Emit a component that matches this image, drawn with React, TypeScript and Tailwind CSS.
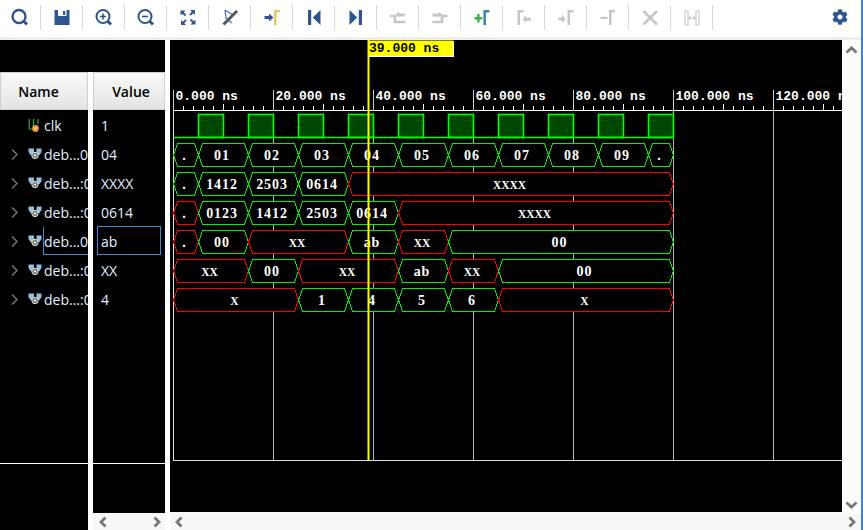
import { FaCog } from 'react-icons/fa';
import type { ReactNode } from 'react';

const NAVY = '#2e5590';
const GRAY = '#c6c6c6';
const GREEN = '#00f000';
const CLK_GREEN = '#00ff00';
const RED = '#ff0000';
const T0 = 173.5;
const px = (ns: number) => T0 + ns * 5;

// [label, start ns, end ns, invalid?]
type Seg = [string, number, number, boolean?];

const buses: Seg[][] = [
  [['.', 0, 5], ['01', 5, 15], ['02', 15, 25], ['03', 25, 35], ['04', 35, 45], ['05', 45, 55], ['06', 55, 65], ['07', 65, 75], ['08', 75, 85], ['09', 85, 95], ['.', 95, 100]],
  [['.', 0, 5], ['1412', 5, 15], ['2503', 15, 25], ['0614', 25, 35], ['XXXX', 35, 100, true]],
  [['.', 0, 5, true], ['0123', 5, 15], ['1412', 15, 25], ['2503', 25, 35], ['0614', 35, 45], ['XXXX', 45, 100, true]],
  [['.', 0, 5, true], ['00', 5, 15], ['XX', 15, 35, true], ['ab', 35, 45], ['XX', 45, 55, true], ['00', 55, 100]],
  [['XX', 0, 15, true], ['00', 15, 25], ['XX', 25, 45, true], ['ab', 45, 55], ['XX', 55, 65, true], ['00', 65, 100]],
  [['X', 0, 25, true], ['1', 25, 35], ['4', 35, 45], ['5', 45, 55], ['6', 55, 65], ['X', 65, 100, true]],
];

const rows = [
  { name: 'clk', value: '1', clk: true },
  { name: 'deb...0)', value: '04' },
  { name: 'deb...:0', value: 'XXXX' },
  { name: 'deb...:0', value: '0614' },
  { name: 'deb...0)', value: 'ab', selected: true },
  { name: 'deb...:0', value: 'XX' },
  { name: 'deb...:0', value: '4' },
];

function Bracket({ x, color }: { x: number; color: string }) {
  return <path d={`M${x} 5h6v2.5h-3.5V20H${x}z`} fill={color} />;
}

function FitCorner({ r }: { r: number }) {
  return (
    <g transform={`rotate(${r} 12 12.5)`} fill={NAVY} stroke={NAVY}>
      <path d="M4.5 5.5h5l-5 5z" stroke="none" />
      <path d="M6 7l3.5 3.5" strokeWidth="2" />
    </g>
  );
}

const tools: ReactNode[] = [
  <g>
    <circle cx="11" cy="11.5" r="6.5" fill="none" stroke={NAVY} strokeWidth="2.4" />
    <path d="M15.5 16l3.5 3.5" stroke={NAVY} strokeWidth="3" />
  </g>,
  <g>
    <path d="M4.5 5h15v15h-15z" fill={NAVY} />
    <path d="M8 5h8.5v6H8z" fill="#fff" />
    <path d="M13 6h2.2v4H13z" fill={NAVY} />
  </g>,
  <g>
    <circle cx="11" cy="11.5" r="6.5" fill="none" stroke={NAVY} strokeWidth="2" />
    <path d="M8 11.5h6M11 8.5v6" stroke={NAVY} strokeWidth="1.6" />
    <path d="M15.5 16l3.5 3.5" stroke={NAVY} strokeWidth="3" />
  </g>,
  <g>
    <circle cx="11" cy="11.5" r="6.5" fill="none" stroke={NAVY} strokeWidth="2" />
    <path d="M8 11.5h6" stroke={NAVY} strokeWidth="1.6" />
    <path d="M15.5 16l3.5 3.5" stroke={NAVY} strokeWidth="3" />
  </g>,
  <g>
    <FitCorner r={0} />
    <FitCorner r={90} />
    <FitCorner r={180} />
    <FitCorner r={270} />
  </g>,
  <g>
    <path d="M7 5L15 10M7 5L8 13L14 18" fill="none" stroke="#4a78b0" strokeWidth="1.3" />
    <path d="M5.5 19.5L19 6" stroke="#555" strokeWidth="2.8" />
  </g>,
  <g>
    <path d="M4.5 11h4.5V8.5l4.5 4-4.5 4V14H4.5z" fill={NAVY} />
    <Bracket x={14} color="#e6c768" />
  </g>,
  <path d="M6 5h3.2v15H6zM10.8 12.5L18.5 5v15z" fill={NAVY} />,
  <path d="M5.5 5l7.7 7.5L5.5 20zM14.8 5H18v15h-3.2z" fill={NAVY} />,
  <g>
    <path d="M4.5 11H9v6h10.5" fill="none" stroke={GRAY} strokeWidth="2.6" />
    <path d="M9.5 9.5l3.5-3v2h6v3h-6v1z" fill={GRAY} />
  </g>,
  <g>
    <path d="M4.5 17H14v-6h5.5" fill="none" stroke={GRAY} strokeWidth="2.6" />
    <path d="M14 9.5l-3.5-3v2h-6v3h6v1z" fill={GRAY} />
  </g>,
  <g>
    <path d="M4.5 12h2.7V9h2.4v3h2.7v2.4H9.6v3H7.2v-3H4.5z" fill="#3fae49" />
    <Bracket x={13.4} color="#3a85b0" />
  </g>,
  <g>
    <path d="M5.5 5h6v2.5H8V20H5.5z" fill={GRAY} />
    <path d="M10.5 14l3.5-3.5v2.2h5v3h-5v2z" fill={GRAY} />
  </g>,
  <g>
    <path d="M4.5 12.5H8V10l3.5 4L8 18v-2.5H4.5z" fill={GRAY} />
    <Bracket x={13.5} color={GRAY} />
  </g>,
  <g>
    <path d="M4.5 11.8h7v2.2h-7z" fill={GRAY} />
    <Bracket x={13} color={GRAY} />
  </g>,
  <path d="M5.5 6l13.5 13.5M19 6L5.5 19.5" stroke={GRAY} strokeWidth="2.6" />,
  <g fill="none" stroke={GRAY}>
    <path d="M5 6h3v14H5zM16 6h3v14h-3z" strokeWidth="1.1" />
    <path d="M9 13h6M10.5 11l-1.8 2 1.8 2M13.5 11l1.8 2-1.8 2" strokeWidth="1.1" />
  </g>,
];

function Chevron({ dir }: { dir: 'left' | 'right' | 'up' | 'down' }) {
  const horizontal = dir === 'left' || dir === 'right';
  const points = {
    left: '6.5,1.5 2,6 6.5,10.5',
    right: '1.5,1.5 6,6 1.5,10.5',
    up: '1.5,6.5 6.5,2 11.5,6.5',
    down: '1.5,1.5 6.5,6 11.5,1.5',
  }[dir];
  return (
    <svg width={horizontal ? 8 : 13} height={horizontal ? 12 : 8} className="block shrink-0">
      <polyline points={points} fill="none" stroke="#777" strokeWidth="2.8" />
    </svg>
  );
}

function ClkIcon() {
  return (
    <svg width="13" height="14" className="block shrink-0">
      <path d="M1.2 0V10H5.5V0" fill="none" stroke="#2fa83c" strokeWidth="1.2" />
      <path d="M10 0V5" fill="none" stroke="#2fa83c" strokeWidth="1.2" />
      <circle cx="7.5" cy="9.5" r="3.4" fill="#e8963a" />
      <path d="M6.2 8.3l1.3 2.4 1.3-2.4" fill="none" stroke="#fff2d0" strokeWidth="0.8" />
    </svg>
  );
}

function BusIcon() {
  return (
    <svg width="14" height="13" className="block shrink-0">
      <path d="M0.5 0.5H6V4L4.5 7H2.5L0.5 4z" fill="#94c0dc" />
      <path d="M13.5 0.5H8.5V4L10 7H11.5L13.5 4z" fill="#94c0dc" />
      <circle cx="7" cy="7.5" r="3.2" fill="#777" stroke="#ddd" strokeWidth="1" />
      <circle cx="7" cy="7.5" r="1.1" fill="#fff" />
    </svg>
  );
}

function ExpandArrow() {
  return (
    <svg width="7" height="11" className="block shrink-0">
      <polyline points="1,0.5 6,5.5 1,10.5" fill="none" stroke="#777" strokeWidth="1.4" />
    </svg>
  );
}

function Waveform() {
  const rowTop = (i: number) => 143.5 + i * 29;
  const labels = [0, 20, 40, 60, 80, 100, 120];
  const ticks: number[] = [];
  for (let t = 0; t <= 134; t += 2) ticks.push(t);

  return (
    <svg width="672" height="472" viewBox="170 40 672 472" className="block shrink-0">
      {/* axis */}
      <path d="M173.5 110.5H842" stroke="#fff" shapeRendering="crispEdges" />
      {ticks.map(t => (
        <path
          key={t}
          d={`M${px(t)} ${t % 20 === 0 ? 90 : t % 10 === 0 ? 104 : 106}V110`}
          stroke={t % 20 === 0 ? '#ccc' : '#fff'}
          shapeRendering="crispEdges"
        />
      ))}
      {labels.map(t => (
        <text key={t} x={px(t) + 2} y="100" className="fill-white font-['Liberation_Mono',monospace] text-[13px] font-bold" xmlSpace="preserve">
          {t}.000 ns
        </text>
      ))}

      {/* grid */}
      {labels.slice(1).map(t => (
        <path key={t} d={`M${px(t)} 110V460`} stroke="#b4b4b4" shapeRendering="crispEdges" />
      ))}
      <path d="M173.5 110V460.5H842" fill="none" stroke="#ddd" shapeRendering="crispEdges" />

      {/* clk */}
      <rect x="174" y="111" width="499" height="27" fill="#000" />
      {[5, 15, 25, 35, 45, 55, 65, 75, 85, 95].map(t => (
        <rect key={t} x={px(t)} y="114.5" width="25" height="23" fill="#004800" stroke={CLK_GREEN} strokeWidth="1.6" />
      ))}
      <path d="M173.5 137.5H673.5" stroke={CLK_GREEN} strokeWidth="1.6" />

      {/* buses */}
      {buses.map((segs, i) => {
        const y = rowTop(i);
        return (
          <g key={i}>
            <rect x="174" y={y} width="499" height="23" fill="#000" />
            {segs.map(([label, a, b, bad]) => {
              const x0 = px(a);
              const x1 = px(b);
              const d = `M${x0} ${y + 11.5}L${x0 + 4} ${y}H${x1 - 4}L${x1} ${y + 11.5}L${x1 - 4} ${y + 23}H${x0 + 4}Z`;
              const isX = label.startsWith('X');
              return (
                <g key={a}>
                  <path d={d} fill="none" stroke={bad ? RED : GREEN} shapeRendering="crispEdges" />
                  <text
                    x={(x0 + x1) / 2 - 1.5}
                    y={y + 16}
                    textAnchor="middle"
                    className={`fill-white font-['Liberation_Serif',serif] font-bold ${isX ? 'text-[11.5px]' : 'text-[14px] tracking-[0.9px]'}`}
                  >
                    {label}
                  </text>
                </g>
              );
            })}
          </g>
        );
      })}

      {/* cursor */}
      <rect x="367.5" y="40" width="2" height="420" fill="#ffff00" />
      <rect x="368" y="40.5" width="85" height="15.5" fill="#ffff00" />
      <path d="M453 41V56H368" fill="none" stroke="#fff" shapeRendering="crispEdges" />
      <text x="369" y="52" className="fill-black font-['Liberation_Mono',monospace] text-[13px] font-bold">39.000 ns</text>
    </svg>
  );
}

export default function App() {
  return (
    <div className="flex h-[530px] w-[863px] overflow-hidden bg-white font-['Open_Sans',sans-serif]">
      <div className="flex w-[861px] flex-col">
        {/* toolbar */}
        <div className="flex h-[37px] shrink-0 items-start pt-[5px]">
          <div className="-ml-px flex">
            {tools.map((icon, i) => (
              <div key={i} className="flex h-[25px] w-[42px] justify-center border-r border-[#d9d9d9]">
                <svg width="24" height="24" className="block">{icon}</svg>
              </div>
            ))}
          </div>
          <div className="ml-auto mr-[13px] mt-[4px]">
            <FaCog size={16} color={NAVY} />
          </div>
        </div>
        <div className="h-[3px] shrink-0 bg-[#eeeeee]" />

        <div className="flex min-h-0 flex-1">
          {/* names and values */}
          <div className="flex w-[165px] shrink-0 flex-col">
            <div className="h-[32px] shrink-0 bg-black" />
            <div className="flex min-h-0 flex-1 justify-between">
              <div className="flex w-[88px] flex-col bg-black">
                <div className="flex h-[38px] shrink-0 items-center justify-center border border-[#cfcfcf] bg-gradient-to-b from-[#f8f8f8] to-[#e4e4e4] pr-[11px] text-[14px] font-semibold text-black">
                  Name
                </div>
                <div className="h-[353px] shrink-0 pt-px">
                  {rows.map((r, i) => (
                    <div key={i} className="relative flex h-[29px] items-center overflow-hidden text-[14px] text-[#e2efff]">
                      <div className="flex w-[27px] shrink-0 justify-end pr-[9px]">{!r.clk && <ExpandArrow />}</div>
                      <div className="w-[17px] shrink-0 pl-px">{r.clk ? <ClkIcon /> : <BusIcon />}</div>
                      <span className="whitespace-nowrap">{r.name}</span>
                      {r.selected && <div className="absolute left-[43px] top-[-1px] h-[29px] w-[50px] border border-[#3a8cd0]" />}
                    </div>
                  ))}
                </div>
                <div className="flex-1 border-t border-white" />
              </div>

              <div className="flex w-[72px] flex-col">
                <div className="flex h-[38px] shrink-0 items-center justify-center border border-[#cfcfcf] bg-gradient-to-b from-[#f8f8f8] to-[#e4e4e4] pl-[4px] text-[14px] font-semibold text-black">
                  Value
                </div>
                <div className="h-[353px] shrink-0 bg-black pt-px">
                  {rows.map((r, i) => (
                    <div key={i} className="relative flex h-[29px] items-center pl-[8px] text-[14px] text-[#e2efff]">
                      {r.value}
                      {r.selected && <div className="absolute left-[4px] top-[-1px] h-[29px] w-[64px] border border-[#3a8cd0]" />}
                    </div>
                  ))}
                </div>
                <div className="flex-1 border-t border-white bg-black" />
                <div className="flex h-[17px] shrink-0 items-center justify-between bg-[#f7f7f7] pl-[6px] pr-[4px]">
                  <Chevron dir="left" />
                  <Chevron dir="right" />
                </div>
              </div>
            </div>
          </div>

          {/* waveform */}
          <div className="ml-[5px] flex min-w-0 flex-1 flex-col">
            <div className="flex">
              <div className="bg-black">
                <Waveform />
              </div>
              <div className="flex flex-1 flex-col items-center justify-between bg-[#fbfbfb] pb-[3px] pt-[6px]">
                <Chevron dir="up" />
                <Chevron dir="down" />
              </div>
            </div>
            <div className="mt-px flex flex-1 items-center justify-between bg-[#f7f7f7] pl-[5px] pr-[5px]">
              <Chevron dir="left" />
              <Chevron dir="right" />
            </div>
          </div>
        </div>
      </div>
      <div className="w-[2px] shrink-0 bg-[#4a7ccc]" />
    </div>
  );
}
